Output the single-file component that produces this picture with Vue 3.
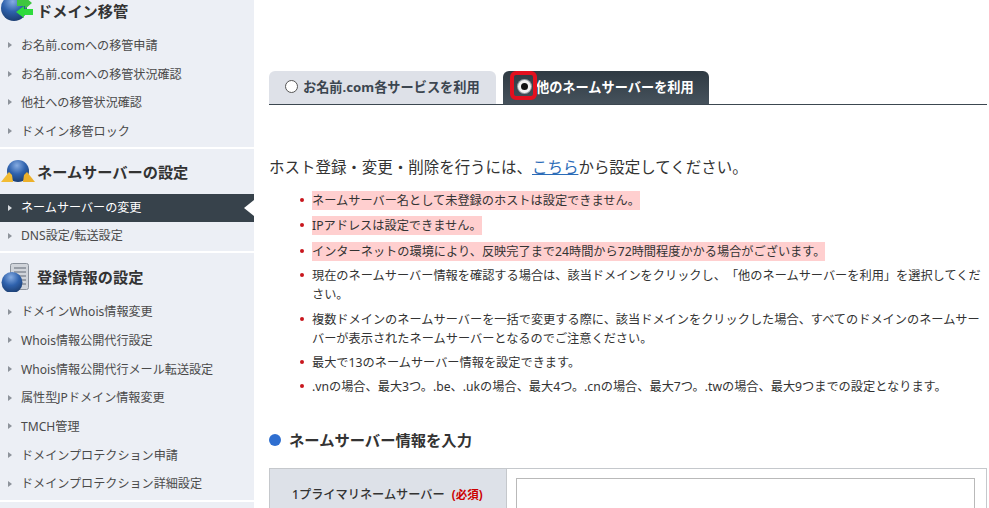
<script setup>
const sections = [
  { title: 'ドメイン移管', icon: 'move', items: ['お名前.comへの移管申請', 'お名前.comへの移管状況確認', '他社への移管状況確認', 'ドメイン移管ロック'] },
  { title: 'ネームサーバーの設定', icon: 'ns', items: ['ネームサーバーの変更', 'DNS設定/転送設定'], active: 0 },
  { title: '登録情報の設定', icon: 'doc', items: ['ドメインWhois情報変更', 'Whois情報公開代行設定', 'Whois情報公開代行メール転送設定', '属性型JPドメイン情報変更', 'TMCH管理', 'ドメインプロテクション申請', 'ドメインプロテクション詳細設定'] }
]
const notes = [
  { text: 'ネームサーバー名として未登録のホストは設定できません。', mark: true, wide: true },
  { text: 'IPアドレスは設定できません。', mark: true, wide: true },
  { text: 'インターネットの環境により、反映完了まで24時間から72時間程度かかる場合がございます。', mark: true },
  { text: '現在のネームサーバー情報を確認する場合は、該当ドメインをクリックし、「他のネームサーバーを利用」を選択してください。' },
  { text: '複数ドメインのネームサーバーを一括で変更する際に、該当ドメインをクリックした場合、すべてのドメインのネームサーバーが表示されたネームサーバーとなるのでご注意ください。' },
  { text: '最大で13のネームサーバー情報を設定できます。' },
  { text: '.vnの場合、最大3つ。.be、.ukの場合、最大4つ。.cnの場合、最大7つ。.twの場合、最大9つまでの設定となります。' }
]
</script>

<template>
  <div class="page">
    <aside class="side">
      <section v-for="(s, si) in sections" :key="s.title" class="group" :class="'group-' + si">
        <h3 class="group-title">
          <svg class="ico" width="36" height="30" viewBox="0 0 36 30">
            <defs>
              <radialGradient :id="'g' + si" cx="45%" cy="25%" r="78%">
                <stop offset="0" stop-color="#86ace2" />
                <stop offset="0.5" stop-color="#2f62ad" />
                <stop offset="1" stop-color="#1b3c6e" />
              </radialGradient>
            </defs>
            <template v-if="s.icon === 'move'">
              <circle cx="14" cy="12" r="13" :fill="`url(#g${si})`" />
              <path d="M32 7 L25 1 V4 H17 V10 H25 V13 Z" fill="#3fc63f" />
              <path d="M16 16 L24 10 V13 H33 V19 H24 V22 Z" fill="#2edb3c" />
            </template>
            <template v-else-if="s.icon === 'ns'">
              <circle cx="18" cy="14" r="11" :fill="`url(#g${si})`" />
              <path d="M1 25 L9 15 L12 18 L13 25 Z" fill="#f2bc34" />
              <path d="M35 25 L27 15 L24 18 L23 25 Z" fill="#ecb02a" />
            </template>
            <template v-else>
              <rect x="10.5" y="1.5" width="18" height="26" rx="2" fill="#d0d4da" stroke="#8b929c" />
              <path d="M14 6H26M14 10H26M14 14H26M14 18H26M14 22H26" stroke="#858c96" stroke-width="1.4" />
              <circle cx="12" cy="20.5" r="10.5" :fill="`url(#g${si})`" />
            </template>
          </svg>
          <span>{{ s.title }}</span>
        </h3>
        <ul class="menu">
          <li v-for="(item, i) in s.items" :key="item" class="menu-item" :class="{ on: s.active === i }">
            <i class="arrow"></i>{{ item }}<b v-if="s.active === i" class="notch"></b>
          </li>
        </ul>
      </section>
    </aside>

    <main class="main">
      <div class="tabs">
        <div class="tab light"><i class="radio"></i>お名前.com各サービスを利用</div>
        <div class="tab dark">
          <i class="radio checked"></i>他のネームサーバーを利用
          <b class="callout"></b>
        </div>
      </div>

      <p class="lead">ホスト登録・変更・削除を行うには、<a>こちら</a>から設定してください。</p>

      <ul class="notes">
        <li v-for="n in notes" :key="n.text" :class="{ wide: n.wide }"><span :class="{ mark: n.mark }">{{ n.text }}</span></li>
      </ul>

      <h2 class="sub"><i class="dot"></i>ネームサーバー情報を入力</h2>

      <div class="form-row">
        <div class="label">1プライマリネームサーバー<em>(必須)</em></div>
        <div class="field"><div class="input"></div></div>
      </div>
    </main>
  </div>
</template>

<style>
html, body { margin: 0; background: #fff; overflow: hidden; }
</style>

<style scoped>
.page {
  display: flex;
  width: 989px;
  height: 508px;
  overflow: hidden;
  font-family: "Noto Sans", "Noto Sans CJK JP", "Liberation Sans", sans-serif;
  text-spacing-trim: space-all;
  color: #333;
}
.side { width: 254px; flex: none; background: #eceff5; }
.group { padding-bottom: 2px; border-bottom: 2px solid #fff; }
.group-1 { padding-bottom: 1px; }
.group-title {
  display: flex;
  align-items: center;
  gap: 1px;
  margin: 0;
  font-size: 15.2px;
  font-weight: 700;
  color: #333;
  line-height: 20px;
}
.group-0 .group-title { height: 31px; padding-bottom: 9px; box-sizing: border-box; }
.group-1 .group-title { height: 45px; }
.group-2 .group-title { height: 44px; padding-top: 3px; box-sizing: border-box; }
.ico { flex: none; }
.menu { list-style: none; margin: 0; padding: 0; }
.menu-item {
  position: relative;
  display: flex;
  align-items: center;
  height: 28.6px;
  box-sizing: border-box;
  padding: 0 0 0 21px;
  font-size: 12.1px;
  color: #4a4a4a;
  white-space: nowrap;
}
.group-1 .menu-item { height: 28px; padding-bottom: 2px; }
.group-2 .menu-item { height: 28.7px; padding-bottom: 1px; }
.arrow {
  position: absolute;
  left: 8px;
  top: 50%;
  margin-top: -3px;
  border-left: 4px solid #8d939b;
  border-top: 3px solid transparent;
  border-bottom: 3px solid transparent;
}
.menu-item.on { background: #37424b; color: #fff; }
.menu-item.on .arrow { border-left-color: #d8dce0; }
.notch {
  position: absolute;
  right: 0;
  top: 50%;
  margin-top: -8px;
  border-right: 10px solid #fff;
  border-top: 8px solid transparent;
  border-bottom: 8px solid transparent;
}
.main { flex: 1; padding: 71px 2px 0 15px; min-width: 0; }
.tabs { display: flex; gap: 7px; height: 33px; border-bottom: 1px solid #3c4750; }
.tab {
  position: relative;
  display: flex;
  align-items: center;
  height: 33px;
  box-sizing: border-box;
  padding: 0 0 3px 16px;
  border-radius: 6px 6px 0 0;
  font-size: 13.2px;
  font-weight: 700;
  white-space: nowrap;
}
.tab.light { width: 227px; background: #dee1e8; color: #3c4650; }
.tab.dark { width: 206px; padding-left: 15px; background: linear-gradient(#2f3a43, #46525c); color: #fff; }
.radio {
  width: 13px;
  height: 13px;
  box-sizing: border-box;
  border: 1px solid #555;
  border-radius: 50%;
  background: #fff;
  margin-right: 5px;
  flex: none;
}
.radio.checked {
  border: 3.5px solid #f2f2f2;
  background: #111;
  margin: 0 5px 0 0;
  box-shadow: 0 0 0 1px #9aa0a6;
}
.callout {
  position: absolute;
  left: 7px;
  top: 0;
  width: 27px;
  height: 29px;
  box-sizing: border-box;
  border: 4px solid #e3101f;
  border-radius: 6px;
}
.lead { margin: 52px 0 0; font-size: 15.48px; line-height: 20px; color: #333; white-space: nowrap; }
.lead a { color: #2b6cb8; text-decoration: underline; }
.notes { list-style: none; margin: 14px 0 0; padding: 0 0 0 43px; font-size: 12.2px; color: #333; }
.notes li { position: relative; line-height: 19px; margin-bottom: 5.4px; }
.notes li.wide { margin-bottom: 6.4px; }
.notes li::before {
  content: "";
  position: absolute;
  left: -12px;
  top: 7px;
  width: 4px;
  height: 4px;
  border-radius: 50%;
  background: #c8161d;
}
.mark { background: #ffcfcf; padding: 1px 0; }
.sub {
  display: flex;
  align-items: center;
  margin: 33.2px 0 0;
  font-size: 15.3px;
  font-weight: 700;
  line-height: 20px;
  color: #333;
}
.dot { width: 12px; height: 12px; border-radius: 50%; background: #2f6fd0; margin-right: 8px; }
.form-row { display: flex; height: 60px; margin: 18px 0 0; border-top: 1px solid #c5c8cc; border-right: 1px solid #c5c8cc; border-left: 1px solid #c5c8cc; }
.label {
  width: 237px;
  flex: none;
  background: #dde1e8;
  border-right: 1px solid #c5c8cc;
  box-sizing: border-box;
  padding: 16px 0 0 22px;
  font-size: 12.2px;
  font-weight: 500;
  line-height: 20px;
}
.label em { font-style: normal; font-weight: 700; color: #c00; font-size: 11.5px; margin-left: 7px; }
.field { flex: 1; padding: 9px 11px 0 9px; }
.input { height: 40px; border: 1px solid #b9b9b9; background: #fff; }
</style>
